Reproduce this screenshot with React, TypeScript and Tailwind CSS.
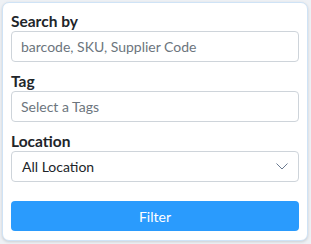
import React from "react";

export default function App() {
  return (
    <div className="w-[311px] h-[244px] bg-[#eef1f5] p-[2px] pr-[3px] pb-[3px]" style={{ fontFamily: "Lato, sans-serif" }}>
      <div className="h-full rounded-[7px] border border-[#cfe3f6] bg-white px-[8px] pt-[8px] shadow-[0_1px_3px_rgba(0,0,0,0.15)]">
        <div className="text-[15.5px] font-bold leading-[20px] text-[#212529]">Search by</div>
        <div className="flex h-[31px] items-center rounded-[4px] border border-[#ced4da] px-[9px] text-[14px] text-[#6c757d]">
          barcode, SKU, Supplier Code
        </div>
        <div className="mt-[9px] text-[15.5px] font-bold leading-[20px] text-[#212529]">Tag</div>
        <div className="flex h-[31px] items-center rounded-[4px] border border-[#ced4da] px-[9px] text-[14px] text-[#6c757d]">
          Select a Tags
        </div>
        <div className="mt-[9px] text-[15.5px] font-bold leading-[20px] text-[#212529]">Location</div>
        <div className="flex h-[31px] items-center justify-between rounded-[4px] border border-[#ced4da] pl-[10px] pr-[10px] text-[14px] text-[#212529]">
          <span>All Location</span>
          <svg width="12" height="7" viewBox="0 0 12 7" fill="none">
            <path d="M0.5 0.5l5.5 5.5 5.5-5.5" stroke="#6b7a90" strokeWidth="1" />
          </svg>
        </div>
        <button className="mt-[19px] flex h-[30px] w-full items-center justify-center rounded-[4px] bg-[#2a9bfd] text-[14px] text-white">
          Filter
        </button>
      </div>
    </div>
  );
}
